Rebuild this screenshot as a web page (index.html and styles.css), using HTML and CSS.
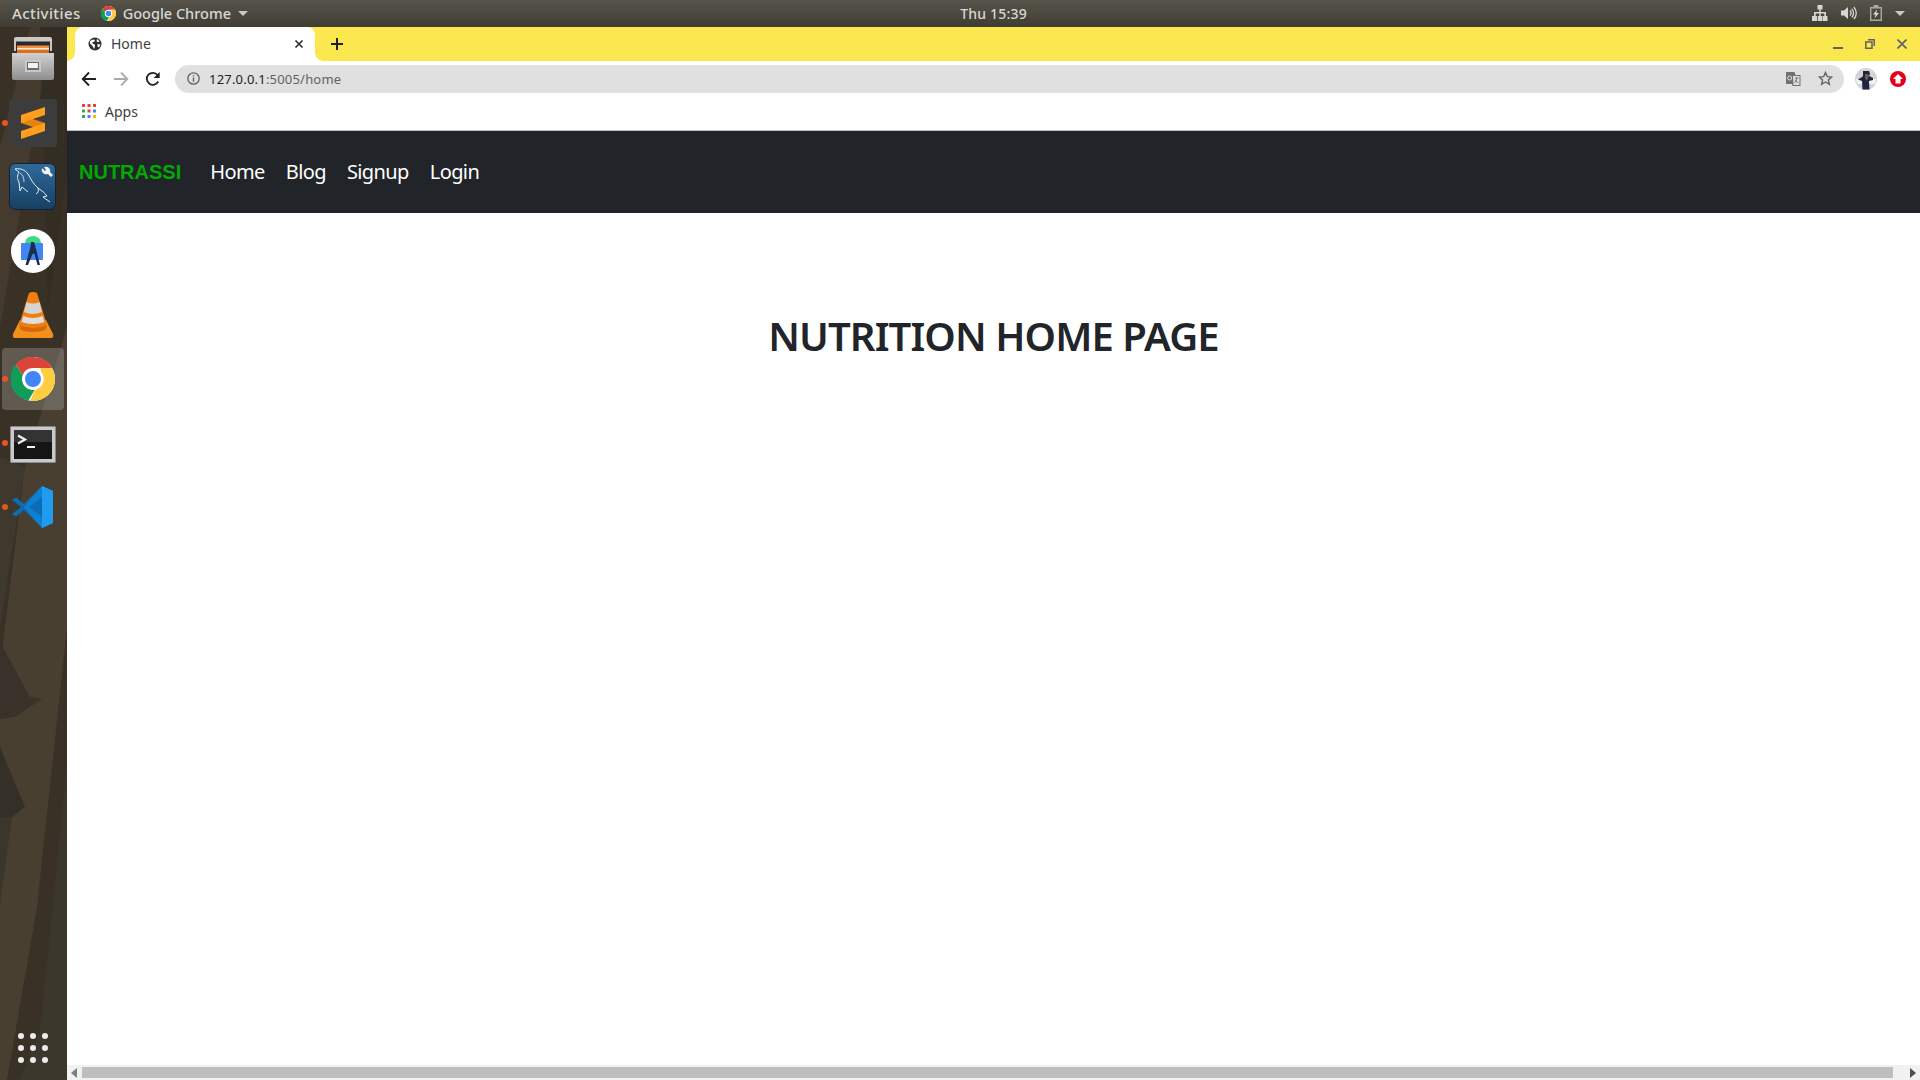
FILE: index.html
```html
<!DOCTYPE html>
<html lang="en">
<head>
<meta charset="utf-8">
<title>Home</title>
<link rel="stylesheet" href="styles.css">
</head>
<body>
<header class="topbar">
  <div class="top-left">
    <span class="activities">Activities</span>
    <span class="appmenu">
      <svg class="chrome-mini" viewBox="0 0 48 48"><use href="#chrome-logo"/></svg>
      <span>Google Chrome</span>
      <span class="caret"></span>
    </span>
  </div>
  <span class="clock">Thu 15:39</span>
  <div class="tray">
    <svg width="16" height="16" viewBox="0 0 16 16"><path fill="#d6d6d2" d="M5.500 0h5v4.500H8.700V7H14v4h1.500v5h-5v-5h1.800V8.500H8.700V11H10v5H6v-5h1.300V8.500H3.700V11h1.500v5H0v-5h2V7h5.300V4.500H5.500z"/></svg>
    <svg width="16" height="16" viewBox="0 0 16 16"><path fill="#d6d6d2" d="M0 5.500h3L7 2v12l-4-3.500H0z"/><path fill="none" stroke="#d6d6d2" stroke-width="1.300" d="M9 5.500a3.500 3.500 0 0 1 0 5M10.800 3.800a6 6 0 0 1 0 8.400M12.800 2a8.500 8.500 0 0 1 0 12"/></svg>
    <svg width="12" height="16" viewBox="0 0 12 16"><path fill="none" stroke="#a9a9a4" stroke-width="1.400" d="M.7 2.700h10.600v12.600H.7z"/><path fill="#a9a9a4" d="M3.500 0h5v2h-5z"/><path fill="#d6d6d2" d="M7 4.500 3 9.500h2.500L4.500 13.500l4.500-5.500H6.500z"/></svg>
    <span class="caret tray-caret"></span>
  </div>
</header>

<div class="desktop">
  <aside class="dock">
    <svg class="wallpaper" viewBox="0 0 67 1053" preserveAspectRatio="none">
      <path fill="#3a3126" d="M0 0h67v1053H0z"/>
      <path fill="#443a2d" d="M0 120 30 0h22L0 300z"/>
      <path fill="#332d24" d="M40 0h27v150L48 280z"/>
      <path fill="#483f31" d="M67 300v300l-30 280-30 173H0V640l25-200z"/>
      <path fill="#3f382c" d="M0 430 25 440 0 600z"/>
      <path fill="#38322a" d="M0 615l30 55 12 2-27 18-15 2z"/>
      <path fill="#353027" d="M0 720l25 60-18 14-7-2z"/>
      <path fill="#3c372d" d="M40 1005 67 740v313H20z"/>
      <path fill="#3b362c" d="M0 790l12 0-12 90z"/>
    </svg>
    <div class="dock-item">
      <svg width="44" height="44" viewBox="0 0 44 44">
        <defs><linearGradient id="cab" x1="0" y1="0" x2="0" y2="1"><stop offset="0" stop-color="#d0d0d0"/><stop offset="1" stop-color="#8f8f8f"/></linearGradient></defs>
        <path fill="#c9c9c9" d="M3 2q0-2 2-2h34q2 0 2 2v12H3z"/>
        <path fill="#2c2a28" d="M5 4.500h34V16H5z"/>
        <path fill="#ef8f3e" d="M6 8.500h32V16H6z"/>
        <path fill="#f8e6cf" d="M6 11h32v1.500H6z"/>
        <path fill="#d96f23" d="M6 13h32v3H6z"/>
        <path fill="url(#cab)" d="M1 16h42v25q0 2-2 2H3q-2 0-2-2z"/>
        <path fill="#c8c8c8" d="M14 23h16v12H14z"/>
        <path fill="#6c6c6c" d="M16 25h12v8H16z"/>
        <path fill="#f2f2f2" d="M17 26h10v5H17z"/>
      </svg>
    </div>
    <div class="dock-item running">
      <svg width="48" height="48" viewBox="0 0 48 48">
        <rect width="48" height="48" rx="3" fill="#3c3c3c"/>
        <path fill="#e8820f" d="M12 16 36 24v8L12 24z"/>
        <path fill="#ff9d1c" d="M12 16 36 8v8L12 24z"/>
        <path fill="#ff9d1c" d="M12 32 36 24v8L12 40z"/>
      </svg>
    </div>
    <div class="dock-item">
      <svg width="48" height="48" viewBox="0 0 48 48">
        <defs><linearGradient id="mysql" x1="0" y1="0" x2="0" y2="1"><stop offset="0" stop-color="#2f6a9b"/><stop offset="1" stop-color="#174062"/></linearGradient></defs>
        <rect x=".5" y=".5" width="46" height="46" rx="6" fill="url(#mysql)" stroke="#0e2436"/>
        <path fill="none" stroke="#e8eef3" stroke-width="1" d="M6 6c6-1 10 1 13 5 3 5 5 10 10 14 4 3 7 5 9 8l-4 1 7 5M29 25c1 3 0 5-2 6M6 6l4 3c-2 4-2 7 0 10l1 9 2-4 6 5"/>
        <path fill="none" stroke="#e8eef3" stroke-width=".8" d="M11 10c3 2 4 5 4 9"/>
        <path fill="#eef2f5" d="M33 5l3 3 1-1-2-3q3-1 5 1t1 4l3 3-2 2-3-3q-3 1-5-1t-1-5z"/>
      </svg>
    </div>
    <div class="dock-item">
      <svg width="44" height="44" viewBox="0 0 44 44">
        <circle cx="22" cy="22" r="22" fill="#fff"/>
        <path fill="#3ddc84" d="M14 14a8 7 0 0 1 16 0z"/>
        <path fill="#4285f4" d="M11 14h20q1 0 1 1v15q0 1-1 1H11q-1 0-1-1V15q0-1 1-1z"/>
        <path fill="#17304f" d="M20 13h3l1 3 5 20h-2.500L23.500 25l-1-.500-1 .5L17 36h-2.500L20 16z"/>
        <circle cx="21.500" cy="16" r="2" fill="#17304f"/>
      </svg>
    </div>
    <div class="dock-item">
      <svg width="42" height="46" viewBox="0 0 42 46">
        <path fill="#f39019" d="M8 28h26l7 14q1 4-2 4H3q-3 0-2-4z"/>
        <path fill="#d26a0c" d="M7 31c4 5 24 5 28 0l-1 6c-4 4-22 4-26 0z"/>
        <path fill="#ef7f12" d="M17 1q4-2 8 0l10 32q-14 6-28 0z"/>
        <path fill="#d4d4d4" d="M14.500 10q6.500 3 13 0l2.500 10q-9 4-18 0z"/>
        <path fill="#dedede" d="M11.500 24q9.500 4 19 0l2 6q-11.500 4-23 0z"/>
      </svg>
    </div>
    <div class="dock-item dock-active running">
      <svg width="44" height="44" viewBox="0 0 48 48">
        <use href="#chrome-logo"/>
      </svg>
    </div>
    <div class="dock-item running">
      <svg class="term-icon" width="46" height="37" viewBox="0 0 46 37">
        <rect x=".5" y=".5" width="45" height="36" rx="1" fill="#c9c9c9" stroke="#8a8a8a"/>
        <rect x="4" y="4" width="38" height="29" fill="#151515"/>
        <path fill="#333" d="M4 4h38v12H4z"/>
        <path fill="none" stroke="#f2f2f2" stroke-width="2.200" d="M8 9.500l7 4-7 4"/>
        <path fill="#f2f2f2" d="M17 20h8v2h-8z"/>
      </svg>
    </div>
    <div class="dock-item running">
      <svg width="44" height="44" viewBox="0 0 44 44">
        <path fill="#0a6db5" d="M31 1 13 19 5 12.500 1 15l9 7-9 7 4 2.500L13 25l18 18z"/>
        <path fill="#0f7fcf" d="M31 1 13 22l18 21 11-5V6zm0 11v20L18 22z"/>
        <path fill="#1f9cf0" d="M31 1l11 5v32l-11 5z"/>
      </svg>
    </div>
    <div class="dock-grid">
      <i></i><i></i><i></i><i></i><i></i><i></i><i></i><i></i><i></i>
    </div>
  </aside>

  <main class="browser">
    <div class="tabstrip">
      <div class="tab">
        <svg width="14" height="14" viewBox="0 0 14 14"><circle cx="7" cy="7" r="6.500" fill="#2d3033"/><path fill="#fff" d="M2 4l3-1.500 2 .5-1 2-2 .5 1 1.500 2 .5v2L6 12 4.500 9 2 6.500zM9 2l2.500 2-1.500 1.500L8.500 4zM9.500 7l3 .5L11 10.500 9.500 9.500z"/></svg>
        <span class="tab-title">Home</span>
        <svg class="tab-close" width="10" height="10" viewBox="0 0 10 10"><path stroke="#2d3033" stroke-width="1.700" d="M1.500 1.500l7 7M8.500 1.500l-7 7"/></svg>
      </div>
      <svg class="newtab" width="12" height="12" viewBox="0 0 12 12"><path stroke="#202124" stroke-width="2" d="M6 0v12M0 6h12"/></svg>
      <div class="winbtns">
        <svg width="10" height="10" viewBox="0 0 10 10"><path fill="#5f6368" d="M0 8h10v2H0z"/></svg>
        <svg width="10" height="10" viewBox="0 0 10 10"><path fill="none" stroke="#5f6368" stroke-width="1.500" d="M3 .8h6.200V7M.8 3h6.200v6.200H.8z"/></svg>
        <svg width="10" height="10" viewBox="0 0 10 10"><path stroke="#5f6368" stroke-width="1.700" d="M.5.500l9 9M9.500.500l-9 9"/></svg>
      </div>
    </div>

    <div class="toolbar">
      <svg class="tool" width="16" height="16" viewBox="0 0 16 16"><path fill="none" stroke="#202124" stroke-width="1.800" d="M15 8H2M8 1.500 1.700 8 8 14.500"/></svg>
      <svg class="tool" width="16" height="16" viewBox="0 0 16 16"><path fill="none" stroke="#a9abae" stroke-width="1.800" d="M1 8h13M8 1.500 14.300 8 8 14.500"/></svg>
      <svg class="tool" width="16" height="16" viewBox="0 0 16 16"><path fill="none" stroke="#202124" stroke-width="1.800" d="M13.200 10.500A6 6 0 1 1 12.500 4"/><path fill="#202124" d="M14.700 1v6h-6z"/></svg>
      <div class="omnibox">
        <svg width="13" height="13" viewBox="0 0 13 13"><circle cx="6.500" cy="6.500" r="5.700" fill="none" stroke="#5f6368" stroke-width="1.300"/><path fill="#5f6368" d="M5.800 5.500h1.400v4.200H5.800zM5.800 3.200h1.400v1.400H5.800z"/></svg>
        <span class="url"><span class="url-host">127.0.0.1</span>:5005/home</span>
        <svg class="omni-translate" width="15" height="14" viewBox="0 0 15 14"><path fill="#6f7275" d="M0 0h8.500l1 3H14.500v11H6.500l-.5-2H0z"/><path fill="#e0e0e0" d="M7 4h6.500v9H7.500z"/><path fill="none" stroke="#6f7275" d="M9 6h3.500M10.500 6c0 3-1.500 4-2 5M9.500 8c.5 1.500 2 2.500 3 3"/><circle cx="3.700" cy="6" r="2" fill="none" stroke="#e0e0e0"/></svg>
        <svg width="15" height="15" viewBox="0 0 15 15"><path fill="none" stroke="#5f6368" stroke-width="1.400" d="M7.500 1.500 9.300 5.600l4.400.4-3.300 2.900 1 4.400-3.900-2.300-3.900 2.300 1-4.400L1.300 6l4.400-.4z"/></svg>
      </div>
      <svg class="avatar" width="22" height="22" viewBox="0 0 22 22">
        <circle cx="11" cy="11" r="11" fill="#d2d4da"/>
        <path fill="#f4f4f4" d="M1 11h20l-1 5H2z"/>
        <path fill="#1d2340" d="M8 3h6l1 3-1 2 4 2v2l-4 1 .5 8.500h-7L7 13 3 11.500 7 9l1-1z"/>
        <path fill="#7a5a4a" d="M10 6h3l1 2-2 5-2-3z"/>
      </svg>
      <svg class="ext" width="16" height="16" viewBox="0 0 16 16"><circle cx="8" cy="8" r="8" fill="#e2001a"/><path fill="#fff" d="M8 3l5 5H10.500v4.500h-5V8H3z"/></svg>
    </div>

    <div class="bookmarks">
      <svg width="14" height="14" viewBox="0 0 14 14">
        <path fill="#ea4335" d="M0 0h3v3H0zM5.500 0h3v3h-3zM11 0h3v3h-3z"/>
        <path fill="#34a853" d="M0 5.500h3v3H0z"/><path fill="#ea4335" d="M5.500 5.500h3v3h-3z"/><path fill="#4285f4" d="M11 5.500h3v3h-3z"/>
        <path fill="#34a853" d="M0 11h3v3H0z"/><path fill="#4285f4" d="M5.500 11h3v3h-3z"/><path fill="#fbbc05" d="M11 11h3v3h-3z"/>
      </svg>
      <span class="bm-label">Apps</span>
    </div>

    <div class="page">
      <nav class="navbar">
        <a class="brand">NUTRASSI</a>
        <ul class="navlinks">
          <li>Home</li>
          <li>Blog</li>
          <li>Signup</li>
          <li>Login</li>
        </ul>
      </nav>
      <div class="content">
        <h1 class="title">NUTRITION HOME PAGE</h1>
      </div>
      <div class="hscroll">
        <svg width="6" height="10" viewBox="0 0 6 10"><path fill="#7d7d7d" d="M6 0v10L0 5z"/></svg>
        <div class="thumb"></div>
        <svg width="6" height="10" viewBox="0 0 6 10"><path fill="#4d4d4d" d="M0 0v10l6-5z"/></svg>
      </div>
    </div>
  </main>
</div>

<svg class="defs" width="0" height="0">
  <defs>
    <symbol id="chrome-logo" viewBox="0 0 48 48">
      <circle cx="24" cy="24" r="24" fill="#fff"/>
      <path fill="#db4437" d="M24 0a24 24 0 0 1 20.800 12H24a12 12 0 0 0-11.300 8L5 8.200A24 24 0 0 1 24 0z"/>
      <path fill="#0f9d58" d="M5 8.200 12.700 20a12 12 0 0 0 13 15.900L19 47.500A24 24 0 0 1 5 8.200z"/>
      <path fill="#ffcd40" d="M44.800 12A24 24 0 0 1 21 47.800L25.700 35.900A12 12 0 0 0 33 16.500L32 12z"/>
      <circle cx="24" cy="24" r="11" fill="#fff"/>
      <circle cx="24" cy="24" r="8.700" fill="#4285f4"/>
    </symbol>
  </defs>
</svg>
</body>
</html>
```

FILE: styles.css
```css
* { box-sizing: border-box; }
html, body { margin: 0; height: 100%; overflow: hidden; }
body {
  width: 1920px;
  height: 1080px;
  display: flex;
  flex-direction: column;
  font-family: "Noto Sans", "Open Sans", sans-serif;
  background: #fff;
}
.defs { position: absolute; }

.topbar {
  height: 27px;
  flex: none;
  display: grid;
  grid-template-columns: 1fr auto 1fr;
  align-items: center;
  padding: 0 12px 1px;
  background: linear-gradient(#57544b, #3f3c34);
  color: #d8d8d3;
  font-size: 15px;
  font-weight: 500;
}
.top-left { display: flex; align-items: center; gap: 20px; }
.activities { letter-spacing: .4px; }
.appmenu { display: flex; align-items: center; gap: 7px; font-size: 14.500px; }
.chrome-mini { width: 15px; height: 15px; }
.caret {
  width: 0; height: 0;
  border-left: 5px solid transparent;
  border-right: 5px solid transparent;
  border-top: 5px solid #c9c9c4;
}
.clock { padding-left: 67px; font-size: 14px; letter-spacing: .2px; }
.tray { display: flex; align-items: center; justify-content: flex-end; gap: 13px; padding-right: 3px; }

.desktop { flex: 1; display: flex; min-height: 0; }

.dock {
  width: 67px;
  flex: none;
  display: flex;
  flex-direction: column;
  align-items: center;
  position: relative;
  padding: 1px 1px 0 0;
  background: #3a3126;
}
.wallpaper { position: absolute; inset: 0; width: 100%; height: 100%; }
.dock-item {
  width: 62px;
  height: 62px;
  margin-bottom: 2px;
  display: flex;
  align-items: center;
  justify-content: center;
  position: relative;
  border-radius: 4px;
}
.dock-active { background: rgba(255,255,255,.2); }
.term-icon { margin-top: 2px; }
.running::before {
  content: "";
  position: absolute;
  left: -0.500px;
  top: 50%;
  width: 6px;
  height: 6px;
  margin-top: -3px;
  border-radius: 50%;
  background: #e95420;
}
.dock-grid {
  position: absolute;
  left: 18px;
  bottom: 17px;
  display: grid;
  grid-template-columns: repeat(3, 6px);
  gap: 6px;
}
.dock-grid i { width: 6px; height: 6px; border-radius: 50%; background: #ebebeb; }

.browser { flex: 1; min-width: 0; display: flex; flex-direction: column; }

.tabstrip {
  height: 34px;
  flex: none;
  display: flex;
  align-items: center;
  background: #fbe84f;
  padding-left: 8px;
}
.tab {
  width: 240px;
  height: 34px;
  display: flex;
  align-items: center;
  background: #fff;
  border-radius: 8px 8px 0 0;
  padding: 0 11px 0 13px;
  font-size: 14px;
  color: #3c4043;
  position: relative;
}
.tab::before, .tab::after {
  content: "";
  position: absolute;
  bottom: 0;
  width: 8px;
  height: 8px;
}
.tab::before { left: -8px; background: radial-gradient(circle at 0 0, #fbe84f 7.500px, #fff 8px); }
.tab::after { right: -8px; background: radial-gradient(circle at 100% 0, #fbe84f 7.500px, #fff 8px); }
.tab-title { flex: 1; margin-left: 9px; padding-bottom: 1px; }
.newtab { margin-left: 16px; }
.winbtns { margin-left: auto; display: flex; align-items: center; gap: 22px; padding-right: 13px; }

.toolbar {
  height: 35px;
  flex: none;
  display: flex;
  align-items: center;
  background: #fff;
  padding-left: 14px;
}
.tool { margin-right: 16px; flex: none; }
.omnibox {
  width: 1669px;
  height: 28px;
  margin-left: -2px;
  display: flex;
  align-items: center;
  background: #e0e0e0;
  border-radius: 14px;
  padding: 0 11px 0 12px;
  font-size: 13px;
  color: #5f6368;
}
.url { margin-left: 9px; flex: 1; letter-spacing: .2px; }
.url-host { color: #202124; }
.omni-translate { margin-right: 17px; }
.avatar { margin-left: 11px; }
.ext { margin-left: 13px; }

.bookmarks {
  height: 35px;
  flex: none;
  display: flex;
  align-items: center;
  padding: 0 0 4px 15px;
  background: #fff;
  border-bottom: 1px solid #bdbdbd;
  font-size: 14px;
  color: #3c4043;
}
.bm-label { margin-left: 9px; }

.page { flex: 1; min-height: 0; display: flex; flex-direction: column; }
.navbar {
  height: 82px;
  flex: none;
  display: flex;
  align-items: center;
  padding: 0 12px;
  background: #212529;
}
.brand {
  font-family: "Liberation Sans", Arial, sans-serif;
  font-weight: 700;
  font-size: 20px;
  color: #0a0;
}
.navlinks {
  list-style: none;
  margin: 0 0 0 29px;
  padding: 0 0 2px;
  display: flex;
  gap: 21px;
  font-size: 20px;
  letter-spacing: -.6px;
  color: #fff;
}
.content { flex: 1; text-align: center; padding-top: 99px; }
.title {
  margin: 0;
  font-size: 40px;
  line-height: 48px;
  font-weight: 600;
  letter-spacing: -.9px;
  color: #212529;
}
.hscroll {
  height: 15px;
  flex: none;
  display: flex;
  align-items: center;
  gap: 5px;
  padding: 0 4px;
  background: #f1f1f1;
}
.thumb { flex: 1; height: 11px; margin-right: 12px; background: #bebebe; }
```
